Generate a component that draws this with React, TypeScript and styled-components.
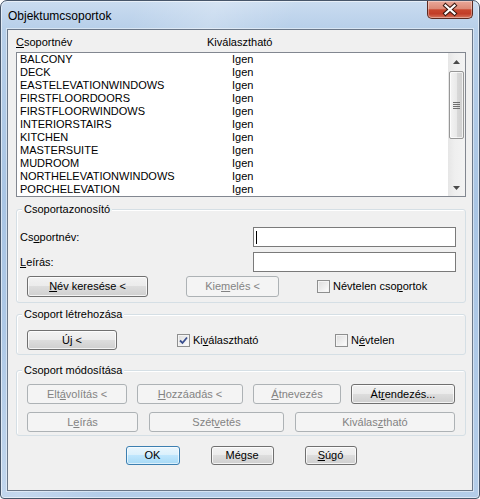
import React from 'react'
import styled, { createGlobalStyle, css } from 'styled-components'

const GlobalStyle = createGlobalStyle`
  html, body {
    margin: 0;
    padding: 0;
    background: #ffffff;
  }
  body {
    font-family: 'Liberation Sans', Arial, sans-serif;
    font-size: 11px;
    color: #000000;
  }
  * {
    box-sizing: border-box;
  }
`

const groupNames = [
  'BALCONY',
  'DECK',
  'EASTELEVATIONWINDOWS',
  'FIRSTFLOORDOORS',
  'FIRSTFLOORWINDOWS',
  'INTERIORSTAIRS',
  'KITCHEN',
  'MASTERSUITE',
  'MUDROOM',
  'NORTHELEVATIONWINDOWS',
  'PORCHELEVATION',
]

function CheckBox({ checked, children }: { checked?: boolean; children: React.ReactNode }) {
  return (
    <CheckLabel>
      <Box>
        {checked && (
          <svg width="11" height="11" viewBox="0 0 11 11">
            <path d="M2 5.5 L4.5 8 L9 2.5" fill="none" stroke="#3a4f8f" strokeWidth="1.8" />
          </svg>
        )}
      </Box>
      <span>{children}</span>
    </CheckLabel>
  )
}

function App() {
  return (
    <>
      <GlobalStyle />
      <Window>
        <TitleBar>
          <TitleText>Objektumcsoportok</TitleText>
          <CloseButton>
            <svg width="44" height="17" viewBox="0 0 44 17">
              <path d="M17.5 4.5 L26.5 12.5 M26.5 4.5 L17.5 12.5" stroke="#3b1810" strokeWidth="4.2" strokeLinecap="square" />
              <path d="M17.5 4.5 L26.5 12.5 M26.5 4.5 L17.5 12.5" stroke="#ffffff" strokeWidth="2.2" strokeLinecap="square" />
            </svg>
          </CloseButton>
        </TitleBar>

        <Client>
          <ListHeader>
            <span>
              <U>C</U>soportnév
            </span>
            <span>Kiválasztható</span>
          </ListHeader>

          <ListBox>
            <Rows>
              {groupNames.map((name) => (
                <Row key={name}>
                  <span>{name}</span>
                  <span>Igen</span>
                </Row>
              ))}
            </Rows>
            <ScrollBar>
              <ArrowButton>
                <svg width="7" height="4" viewBox="0 0 7 4">
                  <path d="M0 4 L3.5 0 L7 4 Z" fill="#4a4a4a" />
                </svg>
              </ArrowButton>
              <Track>
                <Thumb>
                  <svg width="7" height="7" viewBox="0 0 7 7">
                    <path d="M0 0.5 H7 M0 2.5 H7 M0 4.5 H7 M0 6.5 H7" stroke="#6f6f6f" strokeWidth="1" />
                  </svg>
                </Thumb>
              </Track>
              <ArrowButton>
                <svg width="7" height="4" viewBox="0 0 7 4">
                  <path d="M0 0 L7 0 L3.5 4 Z" fill="#4a4a4a" />
                </svg>
              </ArrowButton>
            </ScrollBar>
          </ListBox>

          <Group $mt={12} $pad="17px 9px 5px 3px">
            <Caption>Csoportazonosító</Caption>
            <FieldRow>
              <span>
                Cs<U>o</U>portnév:
              </span>
              <TextBox>
                <Caret />
              </TextBox>
            </FieldRow>
            <FieldRow $mb={4}>
              <span>
                <U>L</U>eírás:
              </span>
              <TextBox />
            </FieldRow>
            <ButtonRow $cols="121px 93px auto" $gap={38}>
              <Button $h={21}>
                <U>N</U>év keresése &lt;
              </Button>
              <Button $h={21} disabled>
                Kie<U>m</U>elés &lt;
              </Button>
              <CheckBox>
                Névtelen cso<U>p</U>ortok
              </CheckBox>
            </ButtonRow>
          </Group>

          <Group $mt={11} $pad="15px 0 4px 3px">
            <Caption>Csoport létrehozása</Caption>
            <ButtonRow $cols="150px 158px auto" $gap={0}>
              <Button $w={90}>
                Ú<U>j</U> &lt;
              </Button>
              <CheckBox checked>
                Ki<U>v</U>álasztható
              </CheckBox>
              <CheckBox>
                N<U>é</U>vtelen
              </CheckBox>
            </ButtonRow>
          </Group>

          <Group $mt={15} $pad="13px 0 3px 3px">
            <Caption>Csoport módosítása</Caption>
            <ButtonRow $cols="100px 106px 88px 104px" $gap={10}>
              <Button disabled>
                Elt<U>á</U>volítás &lt;
              </Button>
              <Button disabled>
                <U>H</U>ozzáadás &lt;
              </Button>
              <Button disabled>
                <U>Á</U>tnevezés
              </Button>
              <Button>
                Át<U>r</U>endezés...
              </Button>
            </ButtonRow>
            <ButtonRow $cols="111px 135px 160px" $gap={11} $mt={8}>
              <Button disabled>
                L<U>e</U>írás
              </Button>
              <Button disabled>
                Szét<U>v</U>etés
              </Button>
              <Button disabled>
                Kiválas<U>z</U>tható
              </Button>
            </ButtonRow>
          </Group>

          <Footer>
            <Button $w={54} $h={19} $default>
              OK
            </Button>
            <Button $w={63} $h={19}>
              Mégse
            </Button>
            <Button $w={52} $h={19}>
              <U>S</U>úgó
            </Button>
          </Footer>
        </Client>
      </Window>
    </>
  )
}

export default App

const Window = styled.div`
  width: 480px;
  height: 499px;
  display: flex;
  flex-direction: column;
  padding: 0 6px 7px 6px;
  border: 1px solid #47566a;
  border-radius: 7px 7px 4px 4px;
  background:
    linear-gradient(112deg, transparent 20%, rgba(255, 255, 255, 0.22) 32%, transparent 44%),
    linear-gradient(to bottom, #cadcf0 0px, #b7cfe9 28px, #a9c5e4 200px, #b4cde9 100%);
  box-shadow: inset 0 0 0 1px rgba(255, 255, 255, 0.55);
  overflow: hidden;
`

const TitleBar = styled.div`
  height: 28px;
  display: flex;
  align-items: center;
  padding-left: 1px;
`

const TitleText = styled.div`
  font-size: 12px;
  color: #000000;
  margin-top: 1px;
`

const CloseButton = styled.div`
  margin-left: auto;
  align-self: flex-start;
  width: 46px;
  height: 18px;
  display: flex;
  align-items: center;
  justify-content: center;
  border: 1px solid #5c2a21;
  border-top: none;
  border-radius: 0 0 5px 5px;
  background: linear-gradient(
    to bottom,
    #e9a899 0%,
    #dc8a77 45%,
    #c8472f 52%,
    #c13d28 75%,
    #d6765d 100%
  );
  box-shadow: inset 0 0 0 1px rgba(255, 255, 255, 0.35);
`

const Client = styled.div`
  flex: 1;
  display: flex;
  flex-direction: column;
  padding: 6px 6px 0 8px;
  background: #f0f0f0;
  border: 1px solid #6a7788;
  box-shadow: 0 0 0 1px rgba(255, 255, 255, 0.45);
`

const U = styled.span`
  text-decoration: underline;
  text-underline-offset: 1px;
`

const ListHeader = styled.div`
  display: grid;
  grid-template-columns: 191px 1fr;
  line-height: 13px;
  margin-bottom: 3px;
`

const ListBox = styled.div`
  height: 145px;
  display: flex;
  border: 1px solid #828790;
  background: #ffffff;
`

const Rows = styled.div`
  flex: 1;
  padding-left: 3px;
  overflow: hidden;
`

const Row = styled.div`
  display: grid;
  grid-template-columns: 212px 1fr;
  line-height: 13px;
  white-space: nowrap;
`

const ScrollBar = styled.div`
  width: 17px;
  display: flex;
  flex-direction: column;
  background: linear-gradient(to right, #e6e6e6 0, #efefef 40%, #f3f3f3 100%);
`

const ArrowButton = styled.div`
  height: 17px;
  display: flex;
  align-items: center;
  justify-content: center;
`

const Track = styled.div`
  flex: 1;
  padding: 1px 1px 0 1px;
`

const Thumb = styled.div`
  height: 68px;
  display: flex;
  align-items: center;
  justify-content: center;
  border: 1px solid #979797;
  border-radius: 2px;
  background: linear-gradient(to right, #f4f4f4 0%, #e9e9e9 50%, #d9d9d9 51%, #cfcfcf 100%);
  box-shadow: inset 0 0 0 1px rgba(255, 255, 255, 0.7);
`

const Group = styled.div<{ $mt: number; $pad: string }>`
  position: relative;
  margin-top: ${({ $mt }) => $mt}px;
  padding: ${({ $pad }) => $pad};
  border: 1px solid #d5dfe5;
  border-radius: 3px;
  box-shadow: inset 1px 1px 0 #ffffff;
`

const Caption = styled.div`
  position: absolute;
  top: -7px;
  left: 5px;
  padding: 0 2px;
  line-height: 13px;
  background: #f0f0f0;
`

const FieldRow = styled.div<{ $mb?: number }>`
  display: grid;
  grid-template-columns: 1fr 203px;
  align-items: center;
  height: 20px;
  margin-bottom: ${({ $mb = 5 }) => $mb}px;
  line-height: 13px;
`

const TextBox = styled.div`
  height: 20px;
  display: flex;
  align-items: center;
  padding-left: 2px;
  border: 1px solid #7a7a7a;
  background: #ffffff;
`

const Caret = styled.span`
  width: 1px;
  height: 13px;
  background: #000000;
`

const ButtonRow = styled.div<{ $cols: string; $gap: number; $mt?: number }>`
  display: grid;
  grid-template-columns: ${({ $cols }) => $cols};
  column-gap: ${({ $gap }) => $gap}px;
  align-items: center;
  padding-left: 7px;
  margin-top: ${({ $mt = 0 }) => $mt}px;
`

const Button = styled.button<{ $w?: number; $h?: number; $default?: boolean }>`
  width: ${({ $w }) => ($w ? `${$w}px` : '100%')};
  height: ${({ $h = 20 }) => $h}px;
  padding: 0;
  font-family: 'Liberation Sans', Arial, sans-serif;
  font-size: 11px;
  line-height: 13px;
  color: #000000;
  border: 1px solid #707070;
  border-radius: 3px;
  background: linear-gradient(to bottom, #f2f2f2 0%, #ebebeb 49%, #dddddd 50%, #cfcfcf 100%);
  box-shadow: inset 0 0 0 1px rgba(255, 255, 255, 0.75);
  white-space: nowrap;

  &:disabled {
    color: #838383;
    border-color: #adb2b5;
    background: #f4f4f4;
    box-shadow: none;
  }

  ${({ $default }) =>
    $default &&
    css`
      border-color: #3c7fb1;
      background: linear-gradient(to bottom, #eaf6fd 0%, #d9f0fc 49%, #bee6fd 50%, #a7d9f5 100%);
      box-shadow: inset 0 0 0 1px rgba(255, 255, 255, 0.6);
    `}
`

const CheckLabel = styled.label`
  display: flex;
  align-items: center;
  gap: 3px;
  line-height: 13px;
  white-space: nowrap;
`

const Box = styled.span`
  width: 13px;
  height: 13px;
  display: flex;
  align-items: center;
  justify-content: center;
  border: 1px solid #8e8f8f;
  background: linear-gradient(135deg, #dcdcdc 0%, #f0f0f0 60%, #ffffff 100%);
  box-shadow: inset 0 0 0 1px #f4f4f4;
`

const Footer = styled.div`
  display: flex;
  justify-content: center;
  gap: 31px;
  margin-top: 10px;
`
